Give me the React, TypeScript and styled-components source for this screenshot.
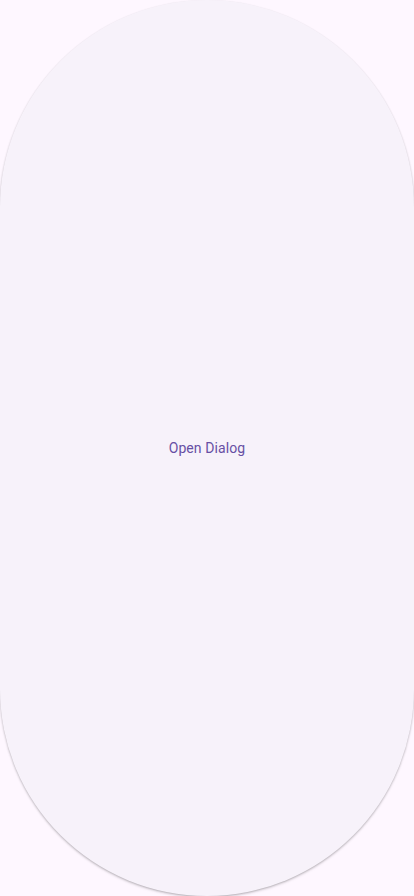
import styled, { createGlobalStyle } from 'styled-components';

const GlobalStyle = createGlobalStyle`
    html, body {
        margin: 0;
        padding: 0;
        background-color: #fef7ff;
        font-family: Roboto, "Noto Sans", sans-serif;
    }
`;

export default function App() {
    return (
        <>
            <GlobalStyle />
            <Screen>
                <DialogButton type="button">Open Dialog</DialogButton>
            </Screen>
        </>
    );
}

const Screen = styled.div`
    width: 414px;
    height: 896px;
    display: flex;
    background-color: #fef7ff;
    overflow: hidden;
`;

const DialogButton = styled.button`
    flex: 1;
    border: none;
    margin: 0;
    padding: 0 24px;
    border-radius: 207px;
    background-color: #f7f2fa;
    color: #6750a4;
    font-family: Roboto, "Noto Sans", sans-serif;
    font-size: 14px;
    font-weight: 400;
    letter-spacing: 0.1px;
    box-shadow: 0 1px 2px rgba(0, 0, 0, 0.22), 0 2px 3px rgba(0, 0, 0, 0.08);
    cursor: pointer;
`;
